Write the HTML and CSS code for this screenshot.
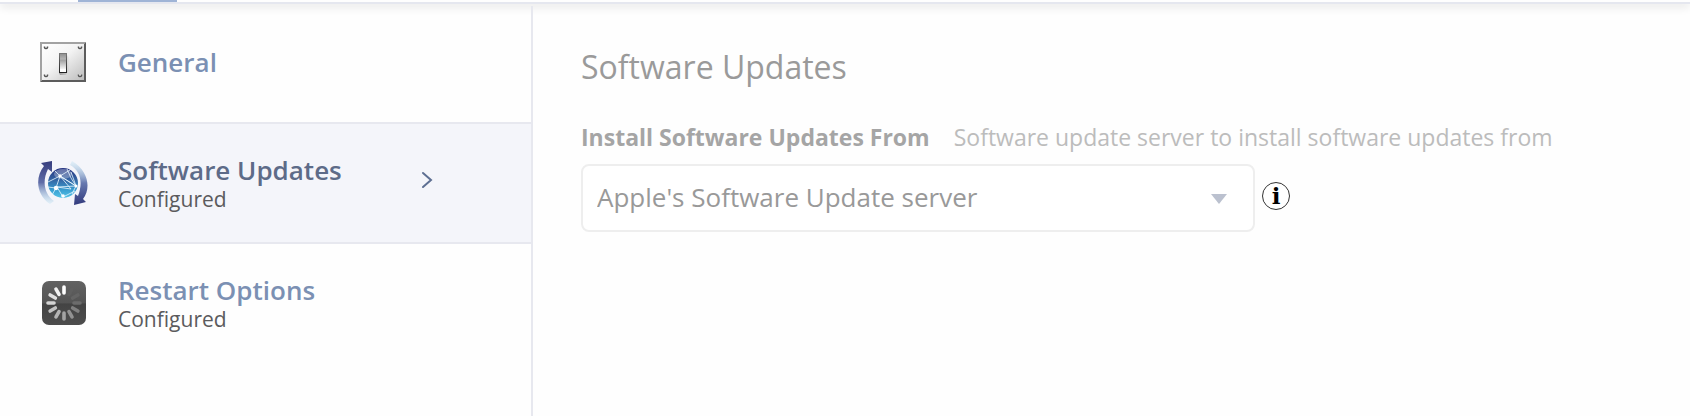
FILE: index.html
```html
<!DOCTYPE html>
<html lang="en">
    <head>
        <meta charset="utf-8">
        <title>Software Updates</title>
        <meta name="viewport" content="width=device-width, initial-scale=1" />
        <link rel="stylesheet" href="styles.css">
    </head>
    <body>
        <header class="tabs">
            <div class="tabs__active"></div>
        </header>

        <div class="layout">

            <nav class="sidebar">
                <a class="item" href="#general">
                    <!-- light switch -->
                    <svg class="item__icon" viewBox="0 0 50 50" aria-hidden="true">
                        <defs>
                            <linearGradient id="plate" x1="0" y1="0" x2="1" y2="1">
                                <stop offset="0" stop-color="#fff" />
                                <stop offset=".45" stop-color="#f3f3f3" />
                                <stop offset="1" stop-color="#bdbdbd" />
                            </linearGradient>
                            <linearGradient id="lever" x1="0" y1="0" x2="0" y2="1">
                                <stop offset="0" stop-color="#8d8d8d" />
                                <stop offset=".3" stop-color="#b5b5b5" />
                                <stop offset=".34" stop-color="#9f9f9f" />
                                <stop offset=".8" stop-color="#f1f1f1" />
                                <stop offset=".84" stop-color="#fff" />
                                <stop offset="1" stop-color="#fff" />
                            </linearGradient>
                            <linearGradient id="lever-edge" x1="0" y1="0" x2="0" y2="1">
                                <stop offset="0" stop-color="#777" />
                                <stop offset="1" stop-color="#222" />
                            </linearGradient>
                            <linearGradient id="lever-shade" x1="0" y1="0" x2="1" y2="0">
                                <stop offset="0" stop-color="#666" stop-opacity=".6" />
                                <stop offset="1" stop-color="#888" stop-opacity="0" />
                            </linearGradient>
                        </defs>
                        <path d="M2 5h46l-2 2H4v36l-2 2z" fill="#a2a2a2" />
                        <path d="M48 5v40H2l2-2h42V7z" fill="#5c5c5c" />
                        <rect x="4" y="7" width="42" height="36" fill="url(#plate)" />
                        <g fill="#fff" stroke="#555" stroke-width="1.5">
                            <path d="M6.500 9.500v1a1.600 1.600 0 0 0 3 0v-1" />
                            <path d="M40.500 9.500v1a1.600 1.600 0 0 0 3 0v-1" />
                            <path d="M6.500 37.500v1a1.600 1.600 0 0 0 3 0v-1" />
                            <path d="M40.500 37.500v1a1.600 1.600 0 0 0 3 0v-1" />
                        </g>
                        <path d="M29 18l3 4v10l-4 6h-6l-1-2h8z" fill="url(#lever-shade)" />
                        <rect x="21.500" y="16.500" width="7" height="19" fill="url(#lever)" stroke="url(#lever-edge)" />
                    </svg>
                    <span class="item__text">
                        <span class="item__title">General</span>
                    </span>
                </a>

                <a class="item item--active" href="#software-updates" aria-current="page">
                    <!-- globe with two arrows going round it -->
                    <svg class="item__icon" viewBox="0 0 50 50" aria-hidden="true">
                        <defs>
                            <linearGradient id="globe" x1="0" y1="0" x2="0" y2="1">
                                <stop offset="0" stop-color="#24317f" />
                                <stop offset=".4" stop-color="#3566a4" />
                                <stop offset=".75" stop-color="#3ba2d3" />
                                <stop offset="1" stop-color="#55c3e6" />
                            </linearGradient>
                            <linearGradient id="arrow-left" x1="0" y1="0" x2="0" y2="1">
                                <stop offset="0" stop-color="#353c7d" />
                                <stop offset=".5" stop-color="#606da8" />
                                <stop offset="1" stop-color="#b9e2f3" stop-opacity=".3" />
                            </linearGradient>
                            <linearGradient id="arrow-right" x1="0" y1="1" x2="0" y2="0">
                                <stop offset="0" stop-color="#31397c" />
                                <stop offset=".5" stop-color="#6779b0" />
                                <stop offset="1" stop-color="#b9e2f3" stop-opacity=".3" />
                            </linearGradient>
                        </defs>
                        <path d="M14 3L3 5l3 3C-3 19-2 37 12 46l4-3C6 36 4 23 10 11l4 3z" fill="url(#arrow-left)" />
                        <path d="M36 47l12-3-3-3C53 31 51 13 34 3l-2 4c11 6 13 18 8 31l-3-2z" fill="url(#arrow-right)" />
                        <circle cx="25" cy="25" r="15" fill="url(#globe)" />
                        <ellipse cx="25" cy="16" rx="9" ry="5" fill="#fff" opacity=".3" />
                        <g fill="none" stroke="#e8f7ff" stroke-width=".8">
                            <path d="M10 24l12-6 16 10-19 1M17 13l5 5-4 12M22 18l10-6M22 18l11 13-14-2 6 10 12-6M38 28l-5-14M22 18l16 10-4 8M10 29l8 1-4 7M29 11l4 9 5 8" />
                        </g>
                        <g fill="#fff">
                            <circle cx="22" cy="18" r="1.700" />
                            <circle cx="18" cy="30" r="2.200" />
                            <circle cx="38" cy="28" r="1.500" />
                            <circle cx="25" cy="38" r="1.800" />
                        </g>
                    </svg>
                    <span class="item__text">
                        <span class="item__title">Software Updates</span>
                        <span class="item__status">Configured</span>
                    </span>
                    <svg class="item__chevron" viewBox="0 0 12 18" aria-hidden="true">
                        <path d="M2 2l8 7-8 7" />
                    </svg>
                </a>

                <a class="item" href="#restart-options">
                    <!-- spinner -->
                    <svg class="item__icon" viewBox="0 0 50 50" aria-hidden="true">
                        <defs>
                            <linearGradient id="tile" x1="0" y1="0" x2="0" y2="1">
                                <stop offset="0" stop-color="#626262" />
                                <stop offset=".5" stop-color="#545454" />
                                <stop offset=".52" stop-color="#434343" />
                                <stop offset="1" stop-color="#4d4d4d" />
                            </linearGradient>
                        </defs>
                        <rect x="4" y="3" width="44" height="44" rx="7" fill="url(#tile)" />
                        <g stroke-width="3.600" stroke-linecap="round">
                            <path d="M26 15V9" stroke="#fff" />
                            <path d="M26 15V9" stroke="#5f5f5f" transform="rotate(30 26 25)" />
                            <path d="M26 15V9" stroke="#646464" transform="rotate(60 26 25)" />
                            <path d="M26 15V9" stroke="#6c6c6c" transform="rotate(90 26 25)" />
                            <path d="M26 15V9" stroke="#808080" transform="rotate(120 26 25)" />
                            <path d="M26 15V9" stroke="#929292" transform="rotate(150 26 25)" />
                            <path d="M26 15V9" stroke="#a3a3a3" transform="rotate(180 26 25)" />
                            <path d="M26 15V9" stroke="#b3b3b3" transform="rotate(210 26 25)" />
                            <path d="M26 15V9" stroke="#c2c2c2" transform="rotate(240 26 25)" />
                            <path d="M26 15V9" stroke="#d4d4d4" transform="rotate(270 26 25)" />
                            <path d="M26 15V9" stroke="#e2e2e2" transform="rotate(300 26 25)" />
                            <path d="M26 15V9" stroke="#f2f2f2" transform="rotate(330 26 25)" />
                        </g>
                    </svg>
                    <span class="item__text">
                        <span class="item__title">Restart Options</span>
                        <span class="item__status">Configured</span>
                    </span>
                </a>
            </nav>

            <main class="content">
                <h1 class="content__title">Software Updates</h1>

                <div class="field__head">
                    <label class="field__label" for="update-server">Install Software Updates From</label>
                    <span class="field__help" id="update-server-help">Software update server to install software updates from</span>
                </div>
                <div class="field__row">
                    <div class="select">
                        <select class="select__input" id="update-server" aria-describedby="update-server-help" disabled>
                            <option>Apple's Software Update server</option>
                        </select>
                        <svg class="select__arrow" viewBox="0 0 16 10" aria-hidden="true">
                            <path d="M0 0h16L8 10z" />
                        </svg>
                    </div>
                    <button class="info" type="button">i</button>
                </div>
            </main>

        </div>
    </body>
</html>
```
FILE: styles.css
```css
* {
    padding: 0px;
    margin: 0px;
    box-sizing: border-box;
}

body{
    display: flex;
    flex-direction: column;
    min-height: 100vh;
    font-family: "Open Sans", sans-serif;
    background-color: #fefefe;
}

/* bottom edge of the tab bar */
.tabs{
    height: 4px;
    padding-left: 78px;
    border-bottom: solid 2px #e5e7ef;
    box-shadow: 0 2px 10px rgba(0, 0, 0, .16);
}

.tabs__active{
    width: 99px;
    height: 2px;
    background-color: #9fb4d6;
}

.layout{
    display: flex;
    flex: 1;
}

.sidebar{
    flex: 0 1 533px;
    margin-top: 2px;
    border-right: solid 2px #e7e8ef;
}

.item{
    display: flex;
    align-items: center;
    height: 120px;
    padding: 0 98px 0 38px;
    border-bottom: solid 2px #e7e8ef;
    color: #7b90b3;
    text-decoration: none;
}

.item:first-child{
    height: 118px;
    padding-bottom: 4px;
}

.item:last-child{
    border-bottom: 0;
    padding-bottom: 2px;
}

.item--active{
    background-color: #f4f5fa;
    color: #5d6b88;
}

.item__icon{
    flex: none;
    width: 50px;
    height: 50px;
    margin-right: 30px;
}

.item__text{
    display: flex;
    flex: 1;
    flex-direction: column;
}

.item__title{
    font-size: 26px;
    font-weight: 600;
    line-height: 32px;
}

.item__status{
    color: #5b5b5d;
    font-size: 21px;
    line-height: 26px;
}

.item__chevron{
    width: 12px;
    height: 18px;
    margin-bottom: 6px;
    fill: none;
    stroke: #5d6f92;
    stroke-width: 2;
    stroke-linecap: round;
}

.content{
    flex: 1;
    padding: 39px 48px;
}

.content__title{
    color: #9a9a9a;
    font-size: 32px;
    font-weight: normal;
    line-height: 48px;
}

.field__head{
    display: flex;
    flex-wrap: wrap;
    align-items: baseline;
    column-gap: 24px;
    margin-top: 30px;
    font-size: 23px;
    line-height: 32px;
}

.field__label{
    color: #a5a5a5;
    font-weight: bold;
}

.field__help{
    color: #bcbcbc;
}

.field__row{
    display: flex;
    align-items: center;
    gap: 7px;
    margin-top: 11px;
}

.select{
    position: relative;
    flex: 0 1 674px;
}

.select__input{
    display: block;
    width: 100%;
    height: 68px;
    padding: 0 60px 2px 14px;
    border: solid 2px #eeeeee;
    border-radius: 8px;
    background-color: white;
    color: #999;
    font-family: inherit;
    font-size: 26px;
    opacity: 1;
    appearance: none;
}

.select__arrow{
    position: absolute;
    top: 30px;
    right: 28px;
    width: 16px;
    height: 10px;
    fill: #bbc1cf;
    pointer-events: none;
}

.info{
    width: 28px;
    height: 28px;
    margin-bottom: 4px;
    border: solid 1px #333;
    border-radius: 50%;
    background-color: white;
    color: black;
    font-family: "DejaVu Serif", serif;
    font-size: 23px;
    font-weight: bold;
    line-height: 24px;
}
```
